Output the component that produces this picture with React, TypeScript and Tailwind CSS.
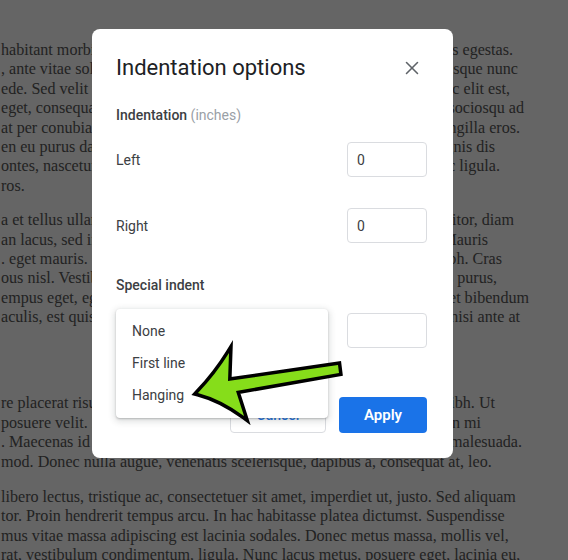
import { X } from 'lucide-react';

type Line = { l: string; r?: string; mr?: string };

const paragraphs: { mt: string; lines: Line[] }[] = [
  {
    mt: 'mt-0',
    lines: [
      { l: 'habitant morbi', r: 'pis egestas.', mr: 'mr-[55px]' },
      { l: ', ante vitae soll', r: 'tesque nunc', mr: 'mr-[50px]' },
      { l: 'ede. Sed velit ur', r: 'nec elit est,', mr: 'mr-[58px]' },
      { l: 'eget, consequat', r: 'ti sociosqu ad', mr: 'mr-[44px]' },
      { l: 'at per conubia n', r: 'ringilla eros.', mr: 'mr-[48px]' },
      { l: 'en eu purus dap', r: 'gnis dis', mr: 'mr-[73px]' },
      { l: 'ontes, nascetur', r: 'nec ligula.', mr: 'mr-[68px]' },
      { l: 'ros.' },
    ],
  },
  {
    mt: 'mt-[15px]',
    lines: [
      { l: 'a et tellus ullam', r: 'ttitor, diam', mr: 'mr-[54px]' },
      { l: 'an lacus, sed int', r: 'it. Mauris', mr: 'mr-[80px]' },
      { l: '. eget mauris. Se', r: 'nibh. Cras', mr: 'mr-[66px]' },
      { l: 'ous nisl. Vestib', r: 'os purus,', mr: 'mr-[71px]' },
      { l: 'empus eget, eges', r: 'met bibendum', mr: 'mr-[39px]' },
      { l: 'aculis, est quis l', r: 't nisi ante at', mr: 'mr-[48px]' },
    ],
  },
  {
    mt: 'mt-[67px]',
    lines: [
      { l: 're placerat risu', r: 'nibh. Ut', mr: 'mr-[73px]' },
      { l: 'posuere velit. Na', r: 'm in mi', mr: 'mr-[87px]' },
      { l: '. Maecenas id arc', r: 'c malesuada.', mr: 'mr-[46px]' },
      { l: 'mod. Donec nulla augue, venenatis scelerisque, dapibus a, consequat at, leo.' },
    ],
  },
  {
    mt: 'mt-[16px]',
    lines: [
      { l: 'libero lectus, tristique ac, consectetuer sit amet, imperdiet ut, justo. Sed aliquam' },
      { l: 'tor. Proin hendrerit tempus arcu. In hac habitasse platea dictumst. Suspendisse' },
      { l: 'mus vitae massa adipiscing est lacinia sodales. Donec metus massa, mollis vel,' },
      { l: 'rat, vestibulum condimentum, ligula. Nunc lacus metus, posuere eget, lacinia eu,' },
    ],
  },
];

function DocumentText() {
  return (
    <div className="pt-[40px] pl-[1px] text-[16.1px] leading-[19.4px] text-[#222] font-['Liberation_Serif',serif]">
      {paragraphs.map((p, i) => (
        <div key={i} className={p.mt}>
          {p.lines.map((line, j) => (
            <div key={j} className="flex h-[19.4px] whitespace-nowrap">
              <span className="shrink-0">{line.l}</span>
              {line.r && <span className={`ml-auto shrink-0 ${line.mr}`}>{line.r}</span>}
            </div>
          ))}
        </div>
      ))}
    </div>
  );
}

function Field({ label, value }: { label?: string; value?: string }) {
  return (
    <div className="flex items-center justify-between">
      <span className="text-sm text-[#3c4043]">{label}</span>
      <div className="w-[80px] h-[35px] rounded border border-[#dadce0] pl-[9px] flex items-center text-sm text-[#3c4043]">
        {value}
      </div>
    </div>
  );
}

function IndentDialog() {
  return (
    <div className="absolute left-[92px] top-[29px] w-[361px] h-[429px] rounded-lg bg-white pt-[25px] pl-6 pr-[26px] pb-[25px] font-['Roboto',sans-serif]">
      <div className="flex items-center justify-between h-[28px]">
        <h2 className="text-[22px] leading-[28px] text-[#202124]">Indentation options</h2>
        <button className="w-6 h-6 mr-[3px] flex items-center justify-center text-[#5f6368]">
          <X size={22} strokeWidth={1.7} />
        </button>
      </div>

      <div className="mt-[23px] h-5 leading-5 text-sm">
        <span className="font-medium text-[#3c4043]">Indentation</span>{' '}
        <span className="text-[#9aa0a6]">(inches)</span>
      </div>

      <div className="mt-[17px]">
        <Field label="Left" value="0" />
      </div>
      <div className="mt-[31px]">
        <Field label="Right" value="0" />
      </div>

      <div className="mt-[32px] h-5 leading-5 text-sm font-medium text-[#3c4043]">Special indent</div>
      <div className="mt-[18px]">
        <Field />
      </div>

      <div className="mt-[49px] flex justify-end gap-[13px]">
        <button className="w-[96px] h-9 rounded border border-[#dadce0] text-sm font-medium text-[#1a73e8]">
          Cancel
        </button>
        <button className="w-[88px] h-9 rounded bg-[#1a73e8] text-[15px] font-semibold text-white">
          Apply
        </button>
      </div>

      {/* open select menu */}
      <div className="absolute left-6 top-[280px] w-[212px] h-[109px] rounded bg-white pt-[6px] shadow-[0_1px_2px_rgba(60,64,67,0.3),0_2px_6px_2px_rgba(60,64,67,0.15)]">
        {['None', 'First line', 'Hanging'].map(item => (
          <div key={item} className="h-8 pl-4 flex items-center text-sm text-[#3c4043]">
            {item}
          </div>
        ))}
      </div>
    </div>
  );
}

function CalloutArrow() {
  return (
    <svg className="absolute inset-0 pointer-events-none" width="568" height="560" viewBox="0 0 568 560">
      <path
        d="M198 393 Q216 374 229 353 L228 381 L338 365 L339 373 L236 391 L244 416 Q221 399 198 393 Z"
        fill="#86dd1a"
        stroke="#000"
        strokeWidth="7"
        strokeLinejoin="miter"
        strokeMiterlimit="4"
        paintOrder="stroke"
      />
    </svg>
  );
}

export default function App() {
  return (
    <div className="relative w-[568px] h-[560px] overflow-hidden bg-[#656565]">
      <DocumentText />
      <IndentDialog />
      <CalloutArrow />
    </div>
  );
}
